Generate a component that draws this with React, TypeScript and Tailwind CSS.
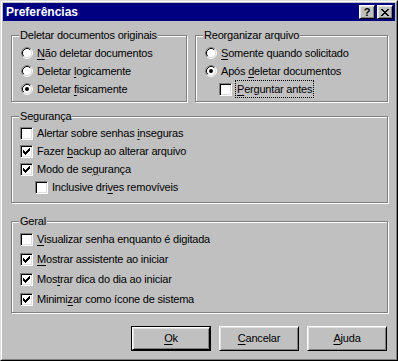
import React from 'react';

const raised =
  'bg-[#c0c0c0] border border-t-white border-l-white border-r-black border-b-black shadow-[inset_1px_1px_#dfdfdf,inset_-1px_-1px_#808080]';

function Label({ text, k }: { text: string; k: number }) {
  return (
    <span className="whitespace-nowrap">
      {text.slice(0, k)}
      <u className="underline underline-offset-[2px]">{text[k]}</u>
      {text.slice(k + 1)}
    </span>
  );
}

function Radio({ checked }: { checked?: boolean }) {
  return (
    <svg width="12" height="12" viewBox="0 0 12 12" className="shrink-0 ml-px">
      <circle cx="6" cy="6" r="4.5" fill="white" />
      <path d="M2.11 9.89 A5.5 5.5 0 0 1 9.89 2.11" fill="none" stroke="#808080" />
      <path d="M9.89 2.11 A5.5 5.5 0 0 1 2.11 9.89" fill="none" stroke="white" />
      <path d="M2.82 9.18 A4.5 4.5 0 0 1 9.18 2.82" fill="none" stroke="black" />
      <path d="M9.18 2.82 A4.5 4.5 0 0 1 2.82 9.18" fill="none" stroke="#dfdfdf" />
      {checked && <circle cx="6" cy="6" r="2" fill="black" />}
    </svg>
  );
}

function Check({ checked }: { checked?: boolean }) {
  return (
    <span className="shrink-0 w-[13px] h-[13px] bg-white border border-t-[#808080] border-l-[#808080] border-r-white border-b-white shadow-[inset_1px_1px_black,inset_-1px_-1px_#dfdfdf] flex items-start justify-start">
      {checked && (
        <svg width="7" height="7" viewBox="0 0 7 7" shapeRendering="crispEdges" className="mt-[2px] ml-[2px]">
          <path
            fill="black"
            d="M6 0h1v1h-1z M5 1h2v1h-2z M0 2h1v1h-1z M4 2h3v1h-3z M0 3h2v1h-2z M3 3h3v1h-3z M0 4h5v1h-5z M1 5h3v1h-3z M2 6h1v1h-1z"
          />
        </svg>
      )}
    </span>
  );
}

function RadioRow({ text, k, checked }: { text: string; k: number; checked?: boolean }) {
  return (
    <div className="h-[18px] flex items-center gap-[4px]">
      <Radio checked={checked} />
      <Label text={text} k={k} />
    </div>
  );
}

function CheckRow({
  text,
  k,
  checked,
  indent,
  focused,
  tall,
}: {
  text: string;
  k: number;
  checked?: boolean;
  indent?: boolean;
  focused?: boolean;
  tall?: boolean;
}) {
  return (
    <div className={`${tall ? 'h-[20px]' : 'h-[18px]'} flex items-center ${indent ? 'pl-[15px]' : ''}`}>
      <Check checked={checked} />
      {focused ? (
        <span className="ml-[3px] h-[18px] flex items-center px-px border border-dotted border-black">
          <Label text={text} k={k} />
        </span>
      ) : (
        <span className="ml-[4px]">
          <Label text={text} k={k} />
        </span>
      )}
    </div>
  );
}

function Group({
  title,
  className,
  children,
}: {
  title: string;
  className: string;
  children: React.ReactNode;
}) {
  return (
    <fieldset
      className={`border border-[#808080] shadow-[inset_1px_1px_white,1px_1px_white] p-0 m-0 min-w-0 ${className}`}
    >
      <legend className="ml-[7px] px-px leading-[13px] bg-[#c0c0c0]">{title}</legend>
      {children}
    </fieldset>
  );
}

function PushButton({ text, def }: { text: string; def?: boolean }) {
  if (def) {
    return (
      <div className="w-[80px] h-[25px] border border-black">
        <div className={`h-full ${raised} flex items-center justify-center`}>
          <Label text={text} k={0} />
        </div>
      </div>
    );
  }
  return (
    <div className={`w-[80px] h-[25px] ${raised} flex items-center justify-center`}>
      <Label text={text} k={0} />
    </div>
  );
}

export default function App() {
  return (
    <div className="w-[398px] h-[361px] bg-[#c0c0c0] border border-t-[#dfdfdf] border-l-[#dfdfdf] border-r-black border-b-black font-['Liberation_Sans',Arial,sans-serif] text-[11px] leading-[13px] text-black">
      <div className="h-full border border-t-white border-l-white border-r-[#808080] border-b-[#808080] p-px flex flex-col">
        <div className="h-[18px] bg-[#000080] flex items-center pl-[3px] pr-[2px]">
          <span className="flex-1 text-white font-bold text-[12px]">Preferências</span>
          <div className={`w-[16px] h-[14px] ${raised} flex items-center justify-center font-bold text-[11px] leading-none text-black`}>
            ?
          </div>
          <div className={`ml-[2px] w-[16px] h-[14px] ${raised} flex items-center justify-center`}>
            <svg width="8" height="7" viewBox="0 0 8 7" shapeRendering="crispEdges">
              <path
                fill="black"
                d="M0 0h2v1h-2z M6 0h2v1h-2z M1 1h2v1h-2z M5 1h2v1h-2z M2 2h4v1h-4z M3 3h2v1h-2z M2 4h4v1h-4z M1 5h2v1h-2z M5 5h2v1h-2z M0 6h2v1h-2z M6 6h2v1h-2z"
              />
            </svg>
          </div>
        </div>

        <div className="flex flex-col pl-[8px] pr-[7px] tracking-[-0.2px]">
          <div className="mt-[8px] flex gap-[8px]">
            <Group title="Deletar documentos originais" className="w-[176px] h-[73px]">
              <div className="pt-[2px] pl-[8px]">
                <RadioRow text="Não deletar documentos" k={0} />
                <RadioRow text="Deletar logicamente" k={8} />
                <RadioRow text="Deletar fisicamente" k={8} checked />
              </div>
            </Group>
            <Group title="Reorganizar arquivo" className="w-[193px] h-[73px]">
              <div className="pt-[2px] pl-[8px]">
                <RadioRow text="Somente quando solicitado" k={0} />
                <RadioRow text="Após deletar documentos" k={5} checked />
                <CheckRow text="Perguntar antes" k={0} indent focused />
              </div>
            </Group>
          </div>

          <Group title="Segurança" className="mt-[8px] h-[93px]">
            <div className="pt-[1px] pl-[8px]">
              <CheckRow text="Alertar sobre senhas inseguras" k={21} />
              <CheckRow text="Fazer backup ao alterar arquivo" k={6} checked />
              <CheckRow text="Modo de segurança" k={10} checked />
              <CheckRow text="Inclusive drives removíveis" k={13} indent />
            </div>
          </Group>

          <Group title="Geral" className="mt-[12px] h-[98px]">
            <div className="pt-[1px] pl-[8px]">
              <CheckRow text="Visualizar senha enquanto é digitada" k={0} tall />
              <CheckRow text="Mostrar assistente ao iniciar" k={0} checked tall />
              <CheckRow text="Mostrar dica do dia ao iniciar" k={3} checked tall />
              <CheckRow text="Minimizar como ícone de sistema" k={6} checked tall />
            </div>
          </Group>

          <div className="mt-[13px] mr-px flex justify-end gap-[8px]">
            <PushButton text="Ok" def />
            <PushButton text="Cancelar" />
            <PushButton text="Ajuda" />
          </div>
        </div>
      </div>
    </div>
  );
}
